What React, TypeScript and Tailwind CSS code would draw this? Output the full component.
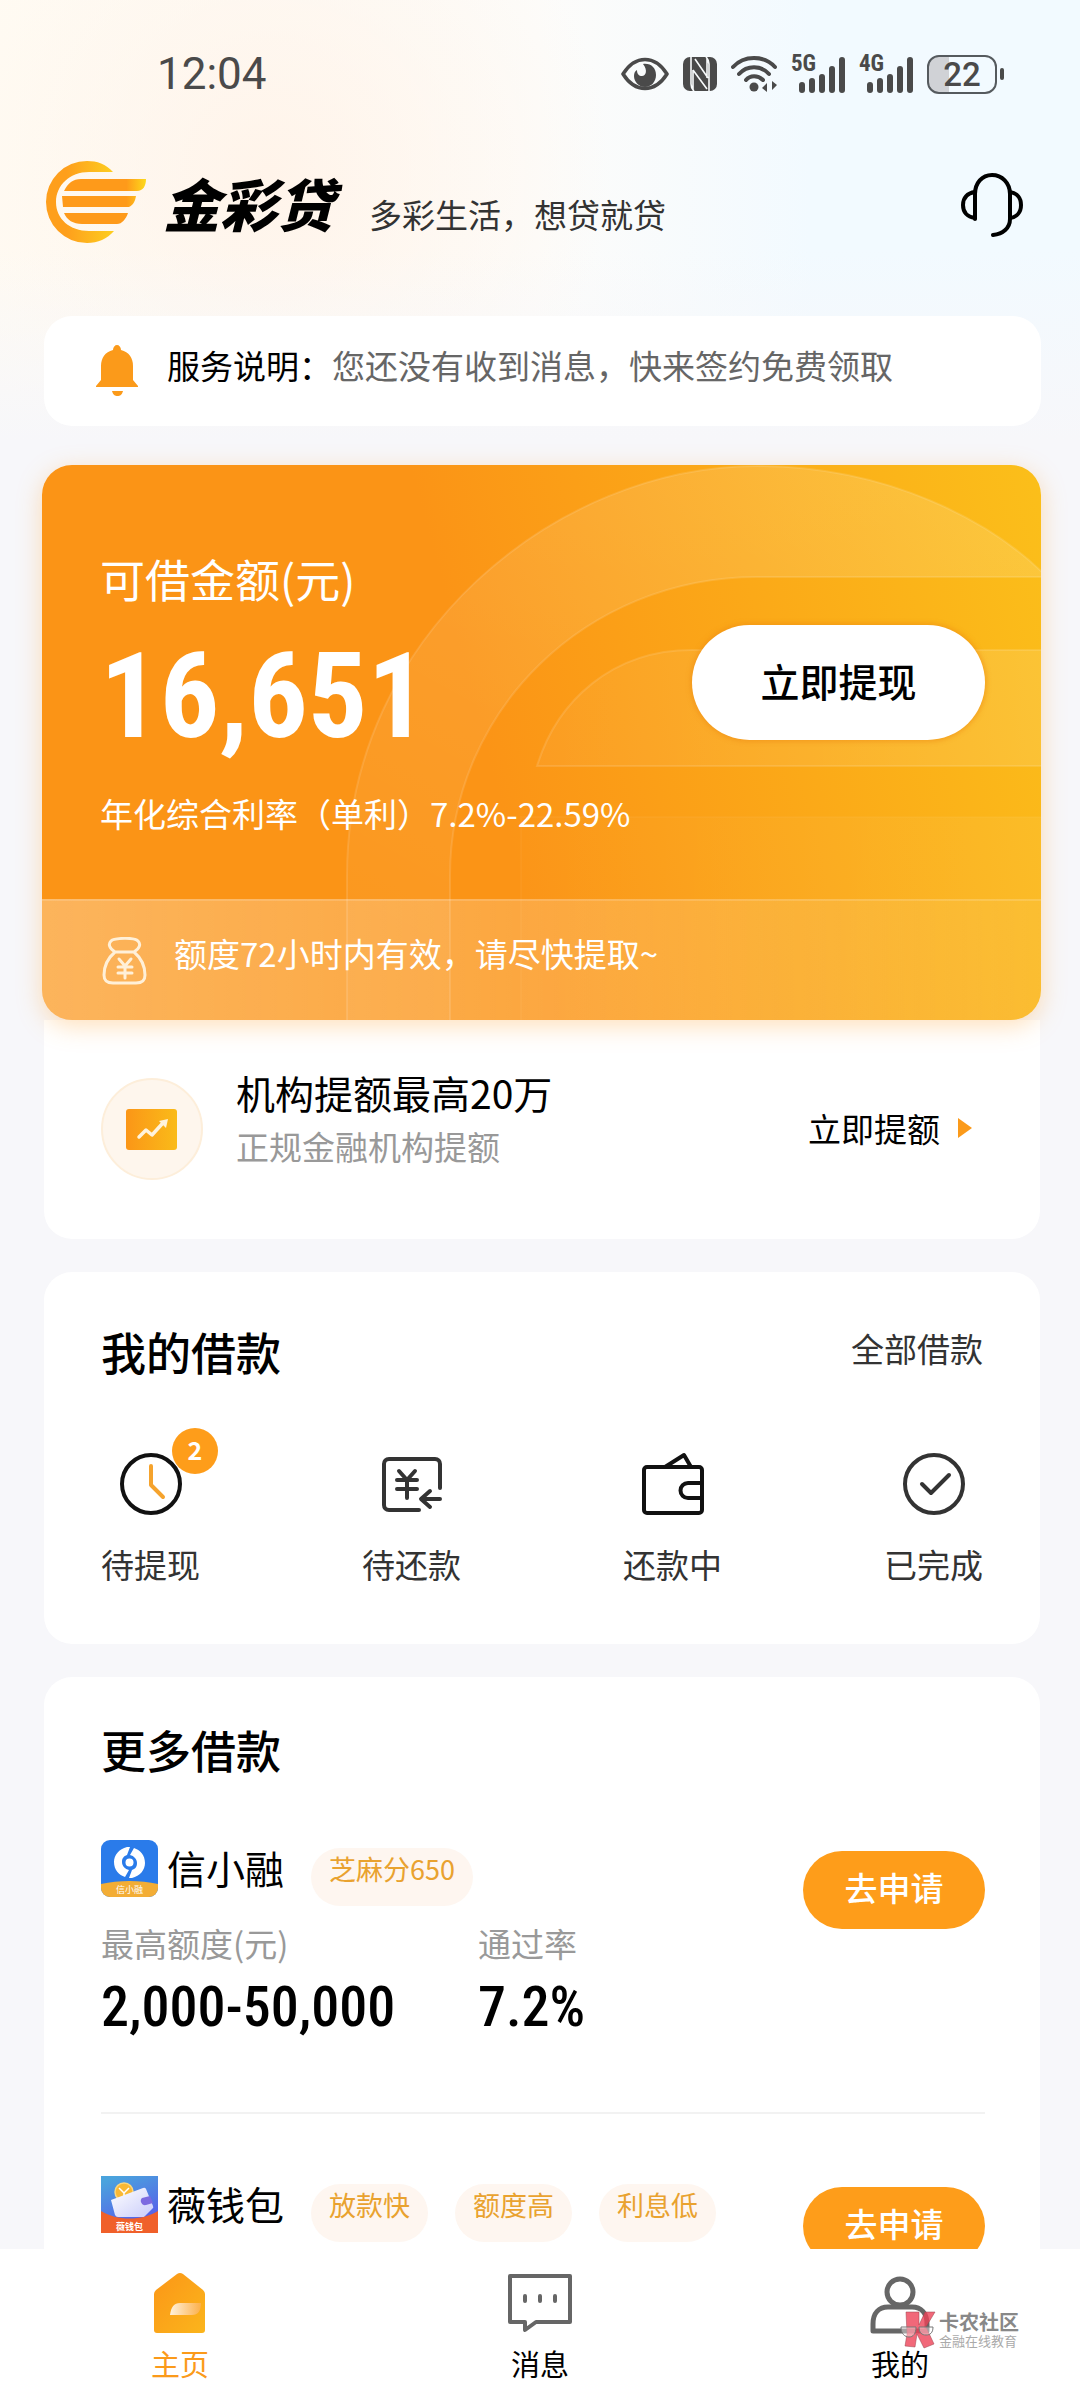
/**
 * Loan app home page: quota card, loan status shortcuts and partner offers.
 * The page body scrolls on its own above a fixed tab bar.
 */
import type { ReactNode } from "react";
import clsx from "clsx";

type Offer = {
  name: string;
  logo: ReactNode;
  tags: string[];
  amount?: string;
  rate?: string;
};

function StatusBar() {
  return (
    <div className="flex h-[100px] items-end justify-between pr-[76px] pb-[2px] pl-[157px] text-[#4a4a4a]">
      <time className="font-['Roboto'] text-[44px] leading-[48px]">12:04</time>
      <div className="flex h-[48px] items-center gap-[14px]">
        <svg width="48" height="34" viewBox="0 0 48 34" fill="none">
          <path d="M2 17C9 6 16 2.500 24 2.500S39 6 46 17C39 28 32 31.500 24 31.500S9 28 2 17Z" stroke="currentColor" strokeWidth="3.600" strokeLinejoin="round" />
          <path d="M22 7c8-1 13 4 13 11s-5 12-11 12-11-5-11-11c0-3 1-5 3-6 0 4 2 6 5 6 4 0 6-6 1-12Z" fill="currentColor" />
        </svg>
        <svg width="34" height="34" viewBox="0 0 34 34">
          <rect width="34" height="34" rx="7" fill="currentColor" />
          <path d="M8 0v27q0 4 3 7M26 34V7q0-4-3-7M10 13l14 19M12 2l13 19M10 13v19M24 2v19" fill="none" stroke="#f8fbfc" strokeWidth="1.600" />
        </svg>
        <svg width="46" height="38" viewBox="0 0 46 38" fill="none" stroke="currentColor" strokeWidth="4" strokeLinecap="round">
          <path d="M2 12C13 0 33 0 44 12M8 19c8-9 22-9 30 0M15 25c4-5 12-5 17 0" />
          <circle cx="23" cy="32" r="4.500" fill="currentColor" stroke="none" />
          <path d="M31 33l5-5v9ZM46 30l-5-4v9Z" fill="currentColor" stroke="none" />
        </svg>
        <Signal label="5G" />
        <Signal label="4G" />
        <div className="flex items-center gap-[3px]">
          <div className="flex h-[39px] w-[70px] items-center justify-center rounded-[12px] border-2 border-[#555a5e] bg-linear-to-r from-[#d0d2d6] from-30% to-transparent to-30% font-['Roboto'] text-[33px] leading-none font-medium">
            22
          </div>
          <div className="h-[12px] w-[4px] rounded-full bg-[#4a4a4a]" />
        </div>
      </div>
    </div>
  );
}

function Signal({ label }: { label: string }) {
  return (
    <div className="relative h-[38px] w-[54px]">
      <span className="absolute top-0 left-0 font-['Roboto_Condensed','Roboto'] text-[23px] leading-[18px] font-bold">{label}</span>
      <svg className="absolute right-0 bottom-0" width="48" height="37" viewBox="0 0 48 37" stroke="currentColor" strokeWidth="6" strokeLinecap="round">
        <path d="M5 29v5M15 25v9M25 21v13M35 13v21M45 4v30" />
      </svg>
    </div>
  );
}

function BrandHeader() {
  return (
    <header className="mt-[52px] flex h-[100px] items-center px-[44px]">
      <svg width="104" height="84" viewBox="0 0 104 84">
        <defs>
          <linearGradient id="ring-fill" x1="0" x2="1">
            <stop offset="0.3" stopColor="#fe9f1c" />
            <stop offset="1" stopColor="#fdce20" />
          </linearGradient>
          <linearGradient id="ray-fill" gradientUnits="userSpaceOnUse" x1="18" y1="0" x2="104" y2="0">
            <stop offset="0.75" stopColor="#fe9a1a" />
            <stop offset="1" stopColor="#fde01c" />
          </linearGradient>
        </defs>
        <path d="M69 12C62 4 53 1 43 1a41 41 0 0 0 0 82c11 0 20-4 27-12H45C26 71 12 59 12 42S26 12 45 12Z" fill="url(#ring-fill)" />
        <path d="M20 31c4-8 9-12 17-12h65c0 7-3 12-9 12ZM18 36h74c-1 6-3 9-7 11H19ZM20 53h64c-2 6-6 11-11 11H38c-9 0-15-4-18-11Z" fill="url(#ray-fill)" />
      </svg>
      <h1 className="ml-[15px] text-[57px] leading-[64px] font-black italic">金彩贷</h1>
      <p className="mt-[24px] ml-[35px] text-[33px] leading-[44px] text-[#333]">多彩生活，想贷就贷</p>
      <button type="button" aria-label="客服" className="mt-[6px] mr-[13px] ml-auto">
        <svg width="62" height="64" viewBox="0 0 62 64" fill="none" stroke="#000" strokeWidth="4" strokeLinecap="round">
          <path d="M14 46V21C14 10 21 2 31 2s18 8 18 19v25c0 9-7 15-17 16" />
          <path d="M14 19C6 20 2 25 2 32s4 12 12 13M49 19c7 1 11 6 11 13s-4 12-11 13" />
        </svg>
      </button>
    </header>
  );
}

function Notice() {
  return (
    <section className="mr-[39px] ml-[44px] mt-[64px] flex h-[110px] items-center rounded-[28px] bg-white pl-[52px] text-[33px] leading-[44px]">
      <svg width="42" height="52" viewBox="0 0 42 52" fill="#fb9a1a">
        <path d="M21 0c2 0 4 2 4 5 8 2 12 8 12 16v14l5 6v1H0v-1l5-6V21C5 13 9 7 17 5c0-3 2-5 4-5Z" />
        <path d="M16 46h11c-1 4-3 5-5.500 5s-4.500-1-5.500-5Z" />
      </svg>
      <p className="mb-[12px] ml-[29px] text-[#666]">
        <span className="text-black">服务说明：</span>您还没有收到消息，快来签约免费领取
      </p>
    </section>
  );
}

function QuotaCard() {
  return (
    <section className="relative mr-[39px] ml-[42px] mt-[39px] overflow-hidden rounded-[30px] bg-[linear-gradient(75deg,#fb9416_45%,#fbbf1a)] text-white shadow-[0_6px_24px_rgba(255,165,60,0.35)]">
      <svg className="absolute inset-0 h-full w-full" viewBox="0 0 999 555" preserveAspectRatio="xMaxYMin slice">
        <defs>
          <linearGradient id="ring" x1="1" y1="0" x2="0.300" y2="1">
            <stop offset="0" stopColor="#fff" stopOpacity="0.16" />
            <stop offset="1" stopColor="#fff" stopOpacity="0.04" />
          </linearGradient>
          <linearGradient id="ray">
            <stop offset="0" stopColor="#fff" stopOpacity="0.05" />
            <stop offset="1" stopColor="#fff" stopOpacity="0.12" />
          </linearGradient>
          <linearGradient id="ray-low">
            <stop offset="0" stopColor="#fff" stopOpacity="0.01" />
            <stop offset="1" stopColor="#fff" stopOpacity="0.06" />
          </linearGradient>
        </defs>
        <g stroke="#fff" strokeOpacity="0.12" strokeWidth="2">
          <path d="M305 556V411C305 170 515 1 715 1c130 0 235 55 290 111H715C545 112 408 245 408 411v145Z" fill="url(#ring)" />
          <path d="M495 301c20-65 75-116 155-116h355v116Z" fill="url(#ray)" />
          <path d="M479 556V352h530v204Z" fill="url(#ray-low)" strokeOpacity="0.03" />
        </g>
      </svg>
      <div className="relative flex h-[434px] items-center justify-between pr-[56px] pl-[58px]">
        <div className="pt-[20px]">
          <h2 className="text-[45px] leading-[60px]">可借金额(元)</h2>
          <p className="mt-[23px] font-['Roboto_Condensed','Noto_Sans_Condensed','Roboto'] text-[118px] leading-[130px] font-bold">16,651</p>
          <p className="mt-[29px] text-[33px] leading-[44px]">年化综合利率（单利）7.2%-22.59%</p>
        </div>
        <button type="button" className="h-[115px] w-[293px] shrink-0 rounded-full bg-white pb-1 text-[39px] font-medium text-black shadow-[0_0_4px_2px_rgba(240,140,20,0.5)]">
          立即提现
        </button>
      </div>
      <div className="relative flex h-[121px] items-center border-t-2 border-white/15 bg-linear-to-r from-white/30 to-white/5 pl-[60px]">
        <svg width="45" height="48" viewBox="0 0 45 48" fill="none" stroke="#fff0d8" strokeWidth="3" strokeLinecap="round">
          <path d="M13 15C7 11 6 7 9 4s23-4 27 0c3 3 2 7-4 11M13 15h19M13 15C6 21 2 29 2 38c0 6 3 8 9 8h23c6 0 9-2 9-8 0-9-4-17-11-23" />
          <path d="M17 22l6 7 6-7M16 30h14M16 36h14M23 30v11" />
        </svg>
        <p className="mb-[16px] ml-[27px] text-[33px] leading-[44px]">额度72小时内有效，请尽快提取~</p>
      </div>
    </section>
  );
}

function RaiseQuota() {
  return (
    <section className="mr-[40px] ml-[44px] -mt-[30px] flex h-[249px] items-start rounded-b-[28px] bg-white pt-[88px] pr-[68px] pl-[57px]">
      <svg width="102" height="102" viewBox="0 0 102 102">
        <defs>
          <linearGradient id="raise" x1="0" x2="1">
            <stop offset="0" stopColor="#fb9617" />
            <stop offset="1" stopColor="#fabb19" />
          </linearGradient>
        </defs>
        <circle cx="51" cy="51" r="50" fill="#fef6ed" stroke="#fdeeda" strokeWidth="2" />
        <rect x="25" y="31" width="51" height="41" rx="3" fill="url(#raise)" />
        <path d="M38 59l7-7 6 5 10-11" fill="none" stroke="#fff3dc" strokeWidth="3.500" strokeLinecap="round" strokeLinejoin="round" />
        <path d="M58 43l9-2-2 9Z" fill="#fff3dc" />
      </svg>
      <div className="ml-[33px] -mt-[14px]">
        <h2 className="text-[39px] leading-[56px]">机构提额最高20万</h2>
        <p className="text-[33px] leading-[52px] text-[#999]">正规金融机构提额</p>
      </div>
      <a href="#raise" className="mt-[28px] ml-auto flex items-center gap-[18px] text-[33px] leading-[44px]">
        立即提额
        <svg width="14" height="20" viewBox="0 0 14 20" fill="#fb9a1a">
          <path d="M0 0l14 10L0 20Z" />
        </svg>
      </a>
    </section>
  );
}

const SHORTCUTS: { label: string; badge?: number; icon: ReactNode }[] = [
  {
    label: "待提现",
    badge: 2,
    icon: (
      <>
        <circle cx="32" cy="32" r="29" stroke="#111" />
        <path d="M32 14v19l12 12" stroke="#f5a32d" />
      </>
    ),
  },
  {
    label: "待还款",
    icon: (
      <g stroke="#333">
        <path d="M60 36V12c0-3-2-5-5-5H9c-3 0-5 2-5 5v41c0 3 2 5 5 5h30" />
        <path d="M19 19l8 9 8-9M17 28h20M17 37h20M27 28v18M60 47H42M50 39l-9 8 9 8" />
      </g>
    ),
  },
  {
    label: "还款中",
    icon: (
      <g stroke="#111">
        <rect x="3" y="15" width="58" height="46" rx="3" />
        <path d="M24 15l19-12 7 12M60 31H47a7 7 0 0 0 0 15h13" />
      </g>
    ),
  },
  {
    label: "已完成",
    icon: (
      <g stroke="#333">
        <circle cx="32" cy="32" r="29" />
        <path d="M20 32l9 9 18-18" />
      </g>
    ),
  },
];

function MyLoans() {
  return (
    <section className="mr-[40px] ml-[44px] mt-[33px] h-[372px] rounded-[28px] bg-white px-[57px] pt-[48px]">
      <div className="flex items-center justify-between">
        <h2 className="text-[45px] leading-[64px] font-medium">我的借款</h2>
        <a href="#loans" className="-mt-2 text-[33px] leading-[44px] text-[#333]">全部借款</a>
      </div>
      <nav className="mt-[68px] flex justify-between">
        {SHORTCUTS.map((s) => (
          <a key={s.label} href="#loans" className="relative flex flex-col items-center text-[33px] leading-[44px] text-[#333]">
            <svg width="64" height="64" viewBox="0 0 64 64" fill="none" strokeWidth="4" strokeLinecap="round" strokeLinejoin="round">
              {s.icon}
            </svg>
            {s.badge && (
              <span className="absolute -top-[24px] -right-[18px] flex h-[46px] w-[46px] items-center justify-center rounded-full bg-[#fe9d1a] pb-1 text-[25px] font-bold text-white">
                {s.badge}
              </span>
            )}
            <span className="mt-[26px]">{s.label}</span>
          </a>
        ))}
      </nav>
    </section>
  );
}

const OFFERS: Offer[] = [
  {
    name: "信小融",
    tags: ["芝麻分650"],
    amount: "2,000-50,000",
    rate: "7.2%",
    logo: (
      <svg width="57" height="57" viewBox="0 0 57 57">
        <defs>
          <clipPath id="xin">
            <rect width="57" height="57" rx="9" />
          </clipPath>
        </defs>
        <g clipPath="url(#xin)">
          <rect width="57" height="57" fill="#2a7bea" />
          <path d="M0 44c18-4 39-4 57 0v13H0Z" fill="#f3ad35" />
          <path d="M26 7c-8 2-13 8-13 15 0 8 5 13 11 15l4-7c-4-1-7-4-7-8s2-6 5-7l3-8ZM31 38c8-2 13-8 13-15 0-8-5-13-11-15l-4 7c4 1 7 4 7 8s-2 6-5 7l-3 8Z" fill="#fff" />
          <circle cx="28.500" cy="22.500" r="4" fill="#fff" />
          <text x="28.500" y="53" textAnchor="middle" fontSize="9" fill="#fff">信小融</text>
        </g>
      </svg>
    ),
  },
  {
    name: "薇钱包",
    tags: ["放款快", "额度高", "利息低"],
    logo: (
      <svg width="57" height="57" viewBox="0 0 57 57">
        <defs>
          <linearGradient id="wei" x1="0.300" y1="0" x2="0.700" y2="1">
            <stop offset="0" stopColor="#4aa3dd" />
            <stop offset="1" stopColor="#5a52ec" />
          </linearGradient>
          <linearGradient id="purse" x1="0" y1="0" x2="1" y2="1">
            <stop offset="0" stopColor="#fff" />
            <stop offset="1" stopColor="#c9ccfa" />
          </linearGradient>
        </defs>
        <rect width="57" height="57" fill="url(#wei)" />
        <circle cx="23" cy="16" r="9" fill="#f9b834" stroke="#fbd77c" strokeWidth="1.500" />
        <path d="M18 12l5 5 5-5M23 17v6" fill="none" stroke="#fff" strokeWidth="1.500" />
        <path d="M10 24l32-12q2-1 3 1l7 17q1 2-1 3l-8 8H17q-2 0-3-2Z" fill="url(#purse)" />
        <path d="M49 20l-8 2c-3 3 0 8 4 7l7-2Z" fill="#7c6ae0" />
        <path d="M0 35c16 10 41 10 57 0v22H0Z" fill="#f0602a" />
        <text x="28.500" y="54" textAnchor="middle" fontSize="9" fontWeight="bold" fill="#fff">薇钱包</text>
      </svg>
    ),
  },
];

function OfferRow({ offer, last }: { offer: Offer; last: boolean }) {
  return (
    <li className={clsx("flex items-start justify-between", !last && "mb-[62px] h-[274px] border-b-2 border-[#f2f2f2]")}>
      <div>
        <div className="flex">
          {offer.logo}
          <h3 className="ml-[9px] text-[39px] leading-[54px]">{offer.name}</h3>
          <ul className="mt-[8px] ml-[27px] flex gap-[27px]">
            {offer.tags.map((tag) => (
              <li key={tag} className="h-[58px] rounded-full bg-[#fef6f0] px-[18px] text-[27px] leading-[42px] text-[#e9a22f]">
                {tag}
              </li>
            ))}
          </ul>
        </div>
        {offer.amount && (
          <dl className="mt-[15px] flex">
            <div className="w-[377px]">
              <dt className="text-[33px] leading-[44px] text-[#999]">最高额度(元)</dt>
              <dd className="mt-[8px] font-['Roboto_Condensed','Noto_Sans_Condensed','Roboto'] text-[56px] leading-[68px] font-medium">{offer.amount}</dd>
            </div>
            <div>
              <dt className="text-[33px] leading-[44px] text-[#999]">通过率</dt>
              <dd className="mt-[8px] font-['Roboto_Condensed','Noto_Sans_Condensed','Roboto'] text-[56px] leading-[68px] font-medium">{offer.rate}</dd>
            </div>
          </dl>
        )}
      </div>
      <button type="button" className="mt-[11px] h-[78px] w-[182px] shrink-0 rounded-full bg-[#fe9d1a] pb-1 text-[33px] font-medium text-white">
        去申请
      </button>
    </li>
  );
}

function MoreLoans() {
  return (
    <section className="mr-[40px] ml-[44px] mt-[33px] rounded-t-[28px] bg-white pt-[41px] pr-[55px] pb-[80px] pl-[57px]">
      <h2 className="text-[45px] leading-[64px] font-medium">更多借款</h2>
      <ul className="mt-[58px]">
        {OFFERS.map((offer, i) => (
          <OfferRow key={offer.name} offer={offer} last={i === OFFERS.length - 1} />
        ))}
      </ul>
    </section>
  );
}

function TabBar() {
  return (
    <nav className="relative grid h-[151px] shrink-0 grid-cols-3 bg-white text-[29px] leading-[32px]">
      <a href="#home" className="flex flex-col items-center pt-[24px] text-[#fb9a1a]">
        <svg width="66" height="62" viewBox="0 0 66 62">
          <defs>
            <linearGradient id="home" x1="0" y1="0" x2="1" y2="1">
              <stop offset="0" stopColor="#fb9617" />
              <stop offset="1" stopColor="#fbb51c" />
            </linearGradient>
            <linearGradient id="door">
              <stop offset="0" stopColor="#fff1dc" />
              <stop offset="1" stopColor="#fcb04a" />
            </linearGradient>
          </defs>
          <path d="M30 1q3-2 6 0l20 16q2 2 2 4v36q0 3-3 3H10q-3 0-3-3V21q0-2 2-4Z" fill="url(#home)" />
          <path d="M23 42c1-8 4-12 10-12h21c0 8-3 12-9 12Z" fill="url(#door)" />
        </svg>
        <span className="mt-[12px]">主页</span>
      </a>
      <a href="#messages" className="flex flex-col items-center pt-[24px]">
        <svg width="66" height="62" viewBox="0 0 66 62" fill="none" stroke="#666" strokeWidth="4" strokeLinejoin="round">
          <path d="M3 3h60v46H29l-11 8v-8H3Z" />
          <path d="M18 23v5M33 23v5M48 23v5" strokeLinecap="round" />
        </svg>
        <span className="mt-[12px]">消息</span>
      </a>
      <a href="#me" className="flex flex-col items-center pt-[24px]">
        <svg width="66" height="62" viewBox="0 0 66 62" fill="none" stroke="#666" strokeWidth="5">
          <circle cx="33" cy="19" r="13" />
          <path d="M6 58V51C6 40 12 34 21 34h24c9 0 15 6 15 17v7Z" strokeLinejoin="round" />
        </svg>
        <span className="mt-[12px]">我的</span>
      </a>
      <div className="absolute right-[61px] bottom-[51px] flex items-center gap-[3px]">
        <svg width="36" height="38" viewBox="0 0 36 38">
          <path d="M6 1h13v13L25 1h10l-9 15 8 17-10 4-7-14-2 13-10-1 2-12Z" fill="#ee4257" fillOpacity="0.8" stroke="#99434c" strokeWidth="0.500" />
          <path d="M1 16h15c0 7-3 10-7 10s-8-3-8-10ZM19 16h14c0 6-3 8-7 8s-7-2-7-8Z" fill="#fff" fillOpacity="0.4" stroke="#777" />
        </svg>
        <div className="text-[#888]">
          <p className="text-[20px] leading-[22px] font-bold">卡农社区</p>
          <p className="text-[13px] leading-[16px] text-[#aaa]">金融在线教育</p>
        </div>
      </div>
    </nav>
  );
}

export default function App() {
  return (
    <div className="flex h-screen flex-col overflow-hidden bg-[#f7f7fa] font-['Noto_Sans_CJK_SC',sans-serif] text-black">
      <main className="min-h-0 flex-1 overflow-y-auto [scrollbar-width:none]">
        <div className="relative z-10 bg-[linear-gradient(to_bottom,transparent_250px,#f7f7fa_440px),radial-gradient(circle_at_25%_170px,#fff4ea_0,#fff4ea00_340px),linear-gradient(to_right,#fffbf3,#fdfcfa_50%,#f2faff_75%)]">
          <StatusBar />
          <BrandHeader />
          <Notice />
          <QuotaCard />
        </div>
        <RaiseQuota />
        <MyLoans />
        <MoreLoans />
      </main>
      <TabBar />
    </div>
  );
}
